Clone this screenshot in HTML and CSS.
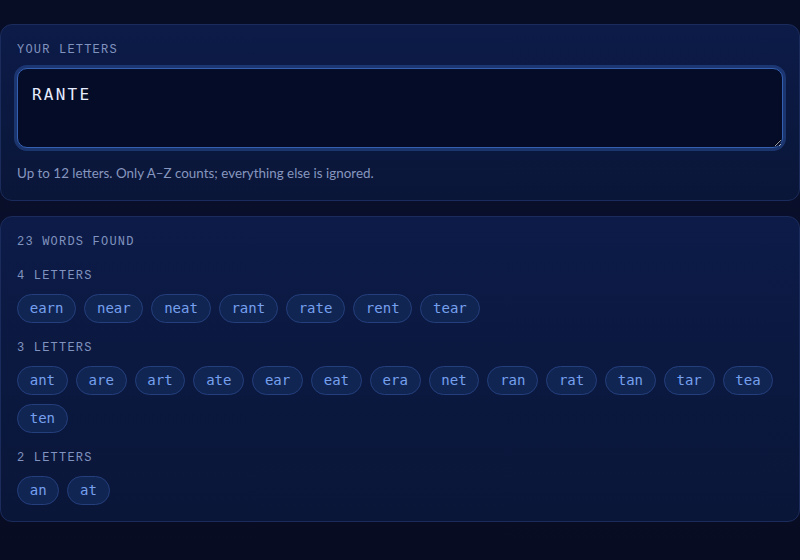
FILE: index.html
```html
<!DOCTYPE html>
<html>
<head>
<meta charset="utf-8">
<link rel="stylesheet" href="styles.css">
</head>
<body>
<main class="page">
  <section class="card card-input">
    <div class="label label-top">YOUR LETTERS</div>
    <textarea class="letters" spellcheck="false">RANTE</textarea>
    <p class="hint">Up to 12 letters. Only A–Z counts; everything else is ignored.</p>
  </section>
  <section class="card">
    <div class="label count">23 WORDS FOUND</div>
    <div class="group">
      <div class="label group-label">4 LETTERS</div>
      <div class="chips">
        <span class="chip">earn</span><span class="chip">near</span><span class="chip">neat</span><span class="chip">rant</span><span class="chip">rate</span><span class="chip">rent</span><span class="chip">tear</span>
      </div>
    </div>
    <div class="group">
      <div class="label group-label">3 LETTERS</div>
      <div class="chips">
        <span class="chip">ant</span><span class="chip">are</span><span class="chip">art</span><span class="chip">ate</span><span class="chip">ear</span><span class="chip">eat</span><span class="chip">era</span><span class="chip">net</span><span class="chip">ran</span><span class="chip">rat</span><span class="chip">tan</span><span class="chip">tar</span><span class="chip">tea</span><span class="chip">ten</span>
      </div>
    </div>
    <div class="group">
      <div class="label group-label">2 LETTERS</div>
      <div class="chips">
        <span class="chip">an</span><span class="chip">at</span>
      </div>
    </div>
  </section>
</main>
</body>
</html>
```

FILE: styles.css
```css
* { box-sizing: border-box; }
html, body {
  margin: 0;
  height: 100%;
}
body {
  background: linear-gradient(180deg, #080d26 0%, #0a0f2c 60%, #080c22 100%);
  font-family: "Lato", "Noto Sans", sans-serif;
  color: #c8d3f0;
}
.page {
  padding: 24px 0;
  display: flex;
  flex-direction: column;
  gap: 15px;
}
.card {
  border: 1px solid #1b2c5c;
  border-radius: 12px;
  background: linear-gradient(180deg, #0c1b48 0%, #0a1638 100%);
  padding: 16px;
  display: flex;
  flex-direction: column;
}
.card-input { padding-bottom: 17px; }
.label {
  font-family: "Liberation Mono", "DejaVu Sans Mono", monospace;
  font-size: 12px;
  line-height: 18px;
  letter-spacing: 0.1em;
  color: #8193bf;
}
.label-top { margin-bottom: 9px; }
.letters {
  display: block;
  width: 100%;
  height: 80px;
  resize: vertical;
  background: #050c27;
  border: 1px solid #3560b0;
  border-radius: 10px;
  box-shadow: 0 0 0 3px rgba(47, 88, 170, 0.45);
  padding: 14px 14px;
  font-family: "DejaVu Sans Mono", monospace;
  font-size: 16px;
  line-height: 24px;
  letter-spacing: 0.14em;
  color: #e6ecff;
  outline: none;
}
.hint {
  margin: 15px 0 0;
  font-size: 13.4px;
  line-height: 20px;
  color: #8796bf;
}
.count { margin-bottom: 16px; }
.group { display: flex; flex-direction: column; }
.group + .group { margin-top: 16px; }
.group-label { margin-bottom: 9px; }
.chips {
  display: flex;
  flex-wrap: wrap;
  gap: 9px 8px;
}
.chip {
  font-family: "DejaVu Sans Mono", monospace;
  font-size: 14px;
  line-height: 17px;
  padding: 5px 11.75px;
  border: 1px solid #243f7c;
  border-radius: 999px;
  background: #112553;
  color: #76a0ee;
}
```
